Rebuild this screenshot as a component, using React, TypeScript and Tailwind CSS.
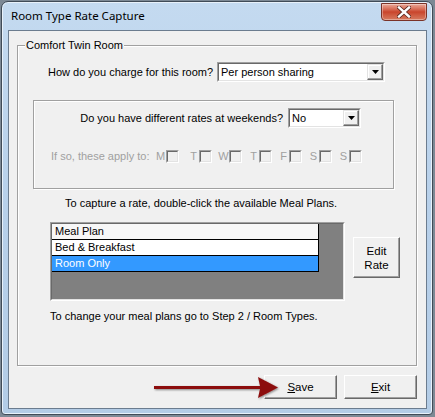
import React from "react";

const font = { fontFamily: '"Liberation Sans", Arial, sans-serif' };

function Combo({ w, text }: { w: string; text: string }) {
  return (
    <div className={`${w} shrink-0 h-[20px] bg-white border border-t-[#a0a0a0] border-l-[#a0a0a0] border-r-white border-b-white flex`}>
      <div className="flex-1 flex border border-t-[#696969] border-l-[#696969] border-r-[#e3e3e3] border-b-[#e3e3e3]">
        <div className="flex-1 pl-[2px] text-[11px] leading-[16px] text-black">{text}</div>
        <div className="w-[16px] h-[16px] bg-[#f0f0f0] border border-t-[#e3e3e3] border-l-[#e3e3e3] border-r-[#696969] border-b-[#696969] shadow-[inset_-1px_-1px_0_#a0a0a0,inset_1px_1px_0_#fff] flex items-center justify-center">
          <svg width="7" height="4" viewBox="0 0 7 4"><path d="M0 0h7L3.5 4z" fill="#000" /></svg>
        </div>
      </div>
    </div>
  );
}

function Check({ label, className = "" }: { label: string; className?: string }) {
  return (
    <div className={`flex items-center ${className}`}>
      <span className="text-[11px] leading-[16px] text-[#a0a0a0] w-[11px] text-center">{label}</span>
      <div className="w-[13px] h-[13px] border border-t-[#a0a0a0] border-l-[#a0a0a0] border-r-white border-b-white">
        <div className="w-full h-full border border-t-[#696969] border-l-[#696969] border-r-[#e3e3e3] border-b-[#e3e3e3] bg-[#f0f0f0]" />
      </div>
    </div>
  );
}

function RaisedButton({ className, children }: { className: string; children: React.ReactNode }) {
  return (
    <div className={`${className} bg-[#f0f0f0] border border-t-white border-l-white border-r-[#696969] border-b-[#696969] shadow-[inset_-1px_-1px_0_#a0a0a0] flex items-center justify-center text-[11.5px] text-black text-center leading-[14px]`}>
      {children}
    </div>
  );
}

export default function App() {
  return (
    <div className="w-[435px] h-[417px] bg-[#7d8995] overflow-hidden" style={font}>
      <div className="ml-[1px] mt-[1px] w-[432px] h-[414px] rounded-t-[7px] rounded-b-[4px] border border-[#404b57] bg-gradient-to-b from-[#c4daf0] via-[#b7d0ea] to-[#b3cce6] shadow-[inset_0_0_0_1px_#e8f1fa] flex flex-col relative">
        <div className="h-[28px] flex items-start justify-between">
          <div className="pl-[9px] pt-[6px] text-[11.5px] leading-[16px] text-black" style={{ fontFamily: '"Noto Sans", "Liberation Sans", sans-serif' }}>
            Room Type Rate Capture
          </div>
          <div className="mr-[5px] mt-[1px] w-[46px] h-[18px] rounded-b-[4px] border border-[#7a3328] bg-gradient-to-b from-[#e9a99a] via-[#c9452c] to-[#d67a5f] shadow-[inset_0_0_0_1px_rgba(255,255,255,0.35)] flex items-center justify-center">
            <svg width="14" height="12" viewBox="0 0 14 12">
              <path d="M2 1.5L12 10.5M12 1.5L2 10.5" stroke="#5a2a22" strokeWidth="4" strokeLinecap="square" />
              <path d="M2 1.5L12 10.5M12 1.5L2 10.5" stroke="#fff" strokeWidth="2.4" strokeLinecap="square" />
            </svg>
          </div>
        </div>

        <div className="ml-[6px] w-[419px] h-[379px] border border-[#6b7c8f] bg-[#f0f0f0] relative">
          <div className="ml-[8px] mt-[14px] w-[400px] h-[321px] border border-[#a0a0a0] shadow-[inset_1px_1px_0_#fff,1px_1px_0_#fff] relative">
            <div className="absolute left-[7px] -top-[8px] bg-[#f0f0f0] px-[1px] text-[11px] leading-[15px] text-black">
              Comfort Twin Room
            </div>

            <div className="mt-[16px] flex items-center">
              <div className="ml-[30px] w-[163px] text-right text-[11px] leading-[16px] text-black whitespace-nowrap">How do you charge for this room?</div>
              <div className="ml-[6px]">
                <Combo w="w-[168px]" text="Per person sharing" />
              </div>
            </div>

            <div className="ml-[15px] mt-[18px] w-[361px] h-[89px] border border-[#a0a0a0] shadow-[inset_1px_1px_0_#fff,1px_1px_0_#fff]">
              <div className="mt-[7px] flex items-center">
                <div className="ml-[40px] w-[209px] text-right text-[11px] leading-[16px] text-black whitespace-nowrap">Do you have different rates at weekends?</div>
                <div className="ml-[5px]">
                  <Combo w="w-[73px]" text="No" />
                </div>
              </div>
              <div className="mt-[20px] flex items-center">
                <div className="ml-[17px] w-[104px] text-[11px] leading-[16px] text-[#a0a0a0] whitespace-nowrap">If so, these apply to:</div>
                <Check label="M" />
                <Check label="T" className="ml-[9px]" />
                <Check label="W" className="ml-[6px]" />
                <Check label="T" className="ml-[6px]" />
                <Check label="F" className="ml-[6px]" />
                <Check label="S" className="ml-[6px]" />
                <Check label="S" className="ml-[6px]" />
              </div>
            </div>

            <div className="ml-[47px] mt-[6px] text-[11px] leading-[16px] text-black whitespace-nowrap">
              To capture a rate, double-click the available Meal Plans.
            </div>

            <div className="mt-[11px] flex items-start">
              <div className="ml-[32px] w-[295px] h-[79px] border border-t-[#a0a0a0] border-l-[#a0a0a0] border-r-white border-b-white">
                <div className="w-full h-full border border-t-[#696969] border-l-[#696969] border-r-[#e3e3e3] border-b-[#e3e3e3] bg-[#808080]">
                  <div className="w-[267px] border-r border-black text-[11px] leading-[15px]">
                    <div className="h-[16px] bg-[#f7f7f7] border-b border-black pl-[3px] text-black">Meal Plan</div>
                    <div className="h-[16px] bg-white border-b border-black pl-[3px] text-black">Bed &amp; Breakfast</div>
                    <div className="h-[16px] bg-[#3399ff] border-b border-black pl-[3px] text-white">Room Only</div>
                  </div>
                </div>
              </div>
              <RaisedButton className="ml-[8px] mt-[15px] w-[47px] h-[41px]">
                <span>Edit<br />Rate</span>
              </RaisedButton>
            </div>

            <div className="ml-[32px] mt-[7px] text-[11px] leading-[16px] text-black whitespace-nowrap">
              To change your meal plans go to Step 2 / Room Types.
            </div>
          </div>

          <div className="mt-[9px] flex justify-end gap-[7px] pr-[9px]">
            <RaisedButton className="w-[73px] h-[24px]">
              <span><span className="underline">S</span>ave</span>
            </RaisedButton>
            <RaisedButton className="w-[73px] h-[24px]">
              <span><span className="underline">E</span>xit</span>
            </RaisedButton>
          </div>

          <svg className="absolute left-[143px] top-[344px]" width="128" height="26" viewBox="0 0 128 26">
            <defs>
              <filter id="sh" x="-10%" y="-30%" width="120%" height="160%">
                <feDropShadow dx="1" dy="1" stdDeviation="1" floodColor="#000" floodOpacity="0.45" />
              </filter>
            </defs>
            <g filter="url(#sh)">
              <path d="M2 11 L108 11 L106 2 L126 12.5 L106 23 L108 14 L2 14 Z" fill="#8c0c0c" />
            </g>
          </svg>
        </div>
      </div>
    </div>
  );
}
